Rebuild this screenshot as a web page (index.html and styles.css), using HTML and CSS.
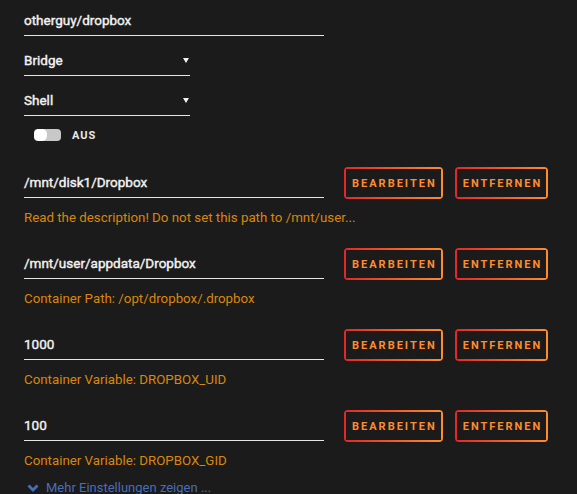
FILE: index.html
```html
<!DOCTYPE html>
<html lang="de">

<head>
    <meta charset="UTF-8">
    <meta name="viewport" content="width=device-width, initial-scale=1.0">
    <title>Docker Container bearbeiten</title>
    <link rel="stylesheet" href="styles.css">
</head>

<body>
    <div class="form">
        <div class="field wide">otherguy/dropbox</div>

        <div class="field select">
            <span>Bridge</span>
            <svg class="caret" width="6" height="5" viewBox="0 0 6 5"><path d="M0 0h6L3 5z" fill="#f2f2f2"/></svg>
        </div>

        <div class="field select">
            <span>Shell</span>
            <svg class="caret" width="6" height="5" viewBox="0 0 6 5"><path d="M0 0h6L3 5z" fill="#f2f2f2"/></svg>
        </div>

        <div class="switch-row">
            <span class="switch"><span class="knob"></span></span>
            <span class="switch-label">AUS</span>
        </div>

        <!-- Pfade und Variablen -->
        <div class="config">
            <div class="config-row">
                <div class="field wide">/mnt/disk1/Dropbox</div>
                <button class="btn">Bearbeiten</button>
                <button class="btn">Entfernen</button>
            </div>
            <div class="help">Read the description! Do not set this path to /mnt/user...</div>
        </div>

        <div class="config">
            <div class="config-row">
                <div class="field wide">/mnt/user/appdata/Dropbox</div>
                <button class="btn">Bearbeiten</button>
                <button class="btn">Entfernen</button>
            </div>
            <div class="help">Container Path: /opt/dropbox/.dropbox</div>
        </div>

        <div class="config">
            <div class="config-row">
                <div class="field wide">1000</div>
                <button class="btn">Bearbeiten</button>
                <button class="btn">Entfernen</button>
            </div>
            <div class="help">Container Variable: DROPBOX_UID</div>
        </div>

        <div class="config">
            <div class="config-row">
                <div class="field wide">100</div>
                <button class="btn">Bearbeiten</button>
                <button class="btn">Entfernen</button>
            </div>
            <div class="help">Container Variable: DROPBOX_GID</div>
        </div>

        <a class="more" href="#">
            <svg width="12" height="8" viewBox="0 0 12 8"><path d="M1.5 1.5L6 6l4.5-4.5" fill="none" stroke="#486dba" stroke-width="2.8"/></svg>
            Mehr Einstellungen zeigen ...
        </a>
    </div>
</body>

</html>
```

FILE: styles.css
```css
* {
    box-sizing: border-box;
    margin: 0;
    padding: 0;
}

body {
    font-family: Roboto, "Liberation Sans", sans-serif;
    font-size: 13px;
    background-color: #1c1b1b;
    color: #f2f2f2;
    min-height: 100vh;
    overflow: hidden;
}

.form {
    padding: 12px 0 0 24px;
}

.field {
    font-size: 13.5px;
    line-height: 16px;
    padding-bottom: 7px;
    border-bottom: 1px solid #e5e5e5;
    -webkit-text-stroke: 0.4px #f2f2f2;
    white-space: nowrap;
}

.field + .field {
    margin-top: 16px;
}

.field.wide {
    width: 300px;
}

.field.select {
    width: 166px;
    display: flex;
    justify-content: space-between;
    align-items: center;
}

.caret {
    margin: 1px 1px 0 0;
}

/* Schalter */
.switch-row {
    margin: 13px 0 0 10px;
    display: flex;
    align-items: center;
    gap: 11px;
    height: 12px;
}

.switch {
    width: 27px;
    height: 12px;
    border-radius: 4px;
    background-color: #c8c8c8;
    display: flex;
}

.knob {
    width: 13px;
    height: 12px;
    border-radius: 5px;
    background-color: #fff;
}

.switch-label {
    font-size: 11px;
    font-weight: bold;
    letter-spacing: 1px;
    color: #e8e8e8;
}

/* Pfade / Variablen */
.config {
    margin-top: 22px;
}

.switch-row + .config {
    margin-top: 26px;
}

.config-row {
    display: flex;
    align-items: flex-end;
    height: 32px;
}

.config-row .field {
    margin-bottom: 1px;
}

.btn {
    height: 32px;
    padding: 0 6px 0 8px;
    margin-left: 12px;
    border: 0;
    border-radius: 4px;
    font-family: Roboto, "Liberation Sans", sans-serif;
    font-size: 11px;
    font-weight: bold;
    letter-spacing: 2px;
    text-transform: uppercase;
    color: #ff8c2f;
    cursor: pointer;
    background:
        linear-gradient(90deg, #e22828, #ff8c2f) 0 0 / 100% 2px no-repeat,
        linear-gradient(90deg, #e22828, #ff8c2f) 0 100% / 100% 2px no-repeat,
        linear-gradient(#e22828, #e22828) 0 0 / 2px 100% no-repeat,
        linear-gradient(#ff8c2f, #ff8c2f) 100% 0 / 2px 100% no-repeat,
        #1c1b1b;
}

.field + .btn {
    margin-left: 20px;
}

.help {
    margin-top: 11px;
    font-size: 13.3px;
    line-height: 16px;
    color: #d9870a;
}

.more {
    margin-top: 11px;
    display: flex;
    align-items: center;
    gap: 7px;
    padding-left: 3px;
    line-height: 16px;
    color: #486dba;
    text-decoration: none;
}
```
